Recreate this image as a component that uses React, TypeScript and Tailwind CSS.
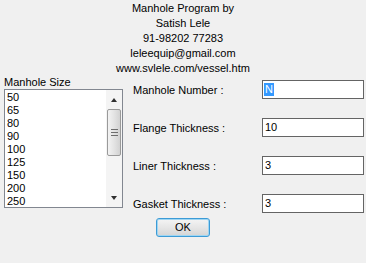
import React from "react";

const SIZES = ["50", "65", "80", "90", "100", "125", "150", "200", "250"];

const FIELDS = [
  { label: "Manhole Number :", value: "N", selected: true },
  { label: "Flange Thickness :", value: "10" },
  { label: "Liner Thickness :", value: "3" },
  { label: "Gasket Thickness :", value: "3" },
];

const HEADER = [
  "Manhole Program by",
  "Satish Lele",
  "91-98202 77283",
  "leleequip@gmail.com",
  "www.svlele.com/vessel.htm",
];

function Scrollbar() {
  return (
    <div className="flex w-[16px] shrink-0 flex-col items-center bg-[#f4f4f4] bg-[radial-gradient(#e2e2e2_0.5px,transparent_0.6px)] bg-[length:2px_2px]">
      {/* up arrow */}
      <div className="flex h-[19px] w-full items-center justify-center">
        <div className="h-0 w-0 border-x-[3.5px] border-b-[4px] border-x-transparent border-b-[#303030]" />
      </div>
      {/* thumb */}
      <div className="flex h-[47px] w-[14px] flex-col items-center justify-center gap-[2px] rounded-[2px] border border-[#9a9a9a] bg-[linear-gradient(to_right,#f3f3f3,#e2e2e2_55%,#d2d2d2)]">
        <div className="h-px w-[7px] bg-[#6e6e6e]" />
        <div className="h-px w-[7px] bg-[#6e6e6e]" />
        <div className="h-px w-[7px] bg-[#6e6e6e]" />
      </div>
      <div className="flex-1" />
      {/* down arrow */}
      <div className="flex h-[19px] w-full items-center justify-center">
        <div className="h-0 w-0 border-x-[3.5px] border-t-[4px] border-x-transparent border-t-[#303030]" />
      </div>
    </div>
  );
}

export default function App() {
  return (
    <div className="h-[263px] w-[366px] overflow-hidden bg-[#f0f0f0] font-['Liberation_Sans',Arial,sans-serif] text-[11px] text-black">
      {/* credits */}
      <div className="flex flex-col items-center pt-px leading-[15px]">
        {HEADER.map((line) => (
          <div key={line}>{line}</div>
        ))}
      </div>

      <div className="flex">
        {/* size list */}
        <div className="ml-[4px] flex w-[119px] flex-col">
          <div className="h-[13px] leading-[13px]">Manhole Size</div>
          <div className="flex h-[119px] border border-[#828790] bg-white">
            <div className="flex flex-1 flex-col pl-[2px] pt-px">
              {SIZES.map((s) => (
                <div key={s} className="h-[13px] leading-[13px]">
                  {s}
                </div>
              ))}
            </div>
            <Scrollbar />
          </div>
        </div>

        {/* dimension fields */}
        <div className="ml-[10px] flex flex-1 flex-col pt-[4px]">
          <div className="flex flex-col gap-[19px]">
            {FIELDS.map((f) => (
              <div key={f.label} className="flex h-[19px] items-center">
                <div className="w-[129px] pt-[2px]">{f.label}</div>
                <div className="flex h-[19px] w-[102px] items-center border border-[#646464] bg-white pl-px">
                  {f.selected ? (
                    <span className="bg-[#3399ff] px-px leading-[13px] text-white">{f.value}</span>
                  ) : (
                    <span className="pl-px leading-[13px]">{f.value}</span>
                  )}
                </div>
              </div>
            ))}
          </div>
          <button
            type="button"
            className="ml-[23px] mt-[5px] flex h-[19px] w-[54px] items-center justify-center rounded-[3px] border border-[#3c9bd6] bg-[linear-gradient(#f4f4f4,#e6e6e6_50%,#d4d4d4)] leading-none shadow-[inset_0_0_0_1px_#9fd6f3]"
          >
            OK
          </button>
        </div>
      </div>
    </div>
  );
}
